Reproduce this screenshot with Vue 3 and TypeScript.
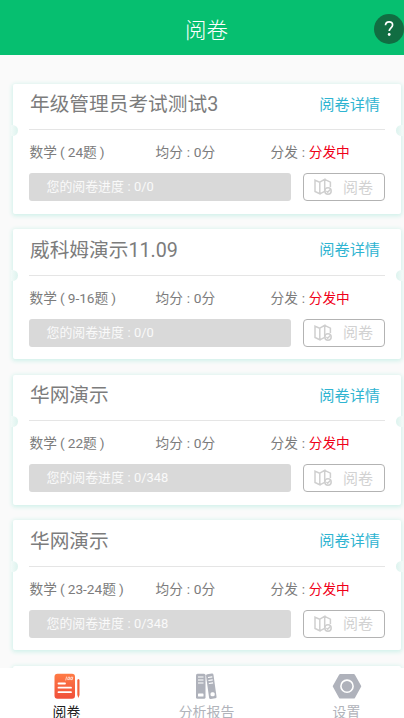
<script setup lang="ts">
interface Exam {
  id: number
  name: string
  questions: string
  average: string
  status: string
  progress: string
}

const exams: Exam[] = [
  { id: 1, name: '年级管理员考试测试3', questions: '24题', average: '0分', status: '分发中', progress: '0/0' },
  { id: 2, name: '威科姆演示11.09', questions: '9-16题', average: '0分', status: '分发中', progress: '0/0' },
  { id: 3, name: '华网演示', questions: '22题', average: '0分', status: '分发中', progress: '0/348' },
  { id: 4, name: '华网演示', questions: '23-24题', average: '0分', status: '分发中', progress: '0/348' },
]
</script>

<template>
  <div class="screen">
    <header class="header">
      <h1 class="heading">阅卷</h1>
      <button class="help" aria-label="帮助">
        <svg viewBox="0 0 30 30" width="30" height="30">
          <path d="M11.500 11.300c.1-2.200 1.500-3.500 3.600-3.500s3.500 1.300 3.500 3.100c0 2.800-3.400 3-3.400 6.200" fill="none" stroke="#fff" stroke-width="1.700" />
          <circle cx="15.200" cy="20.500" r="1.400" fill="#fff" />
        </svg>
      </button>
    </header>

    <main class="list">
      <article v-for="exam in exams" :key="exam.id" class="card">
        <div class="top">
          <h2 class="name">{{ exam.name }}</h2>
          <a class="detail">阅卷详情</a>
        </div>
        <div class="info">
          <span class="subject">数学<i class="punct">(</i>{{ exam.questions }}<i class="punct">)</i></span>
          <span class="average">均分<i class="punct">:</i>{{ exam.average }}</span>
          <span class="status">分发<i class="punct">:</i><b>{{ exam.status }}</b></span>
        </div>
        <div class="actions">
          <div class="progress">您的阅卷进度<i class="punct">:</i>{{ exam.progress }}</div>
          <button class="mark">
            <svg viewBox="0 0 18 18" width="18" height="18" fill="none" stroke="#cfcfcf" stroke-width="1.500">
              <path d="M1 2.200 5.800 4.200V15.800L1 13.500ZM5.800 4.200 10.700 1.400V13.300L5.800 15.800M10.700 1.400 16.400 4.200V9" />
              <circle cx="14" cy="13" r="3.200" />
              <path d="m12.400 13 1.300 1.200 2.500-2.700" />
            </svg>
            <span class="mark-label">阅卷</span>
          </button>
        </div>
      </article>
      <article class="card"></article>
    </main>

    <nav class="tabs">
      <a class="tab active">
        <svg viewBox="0 0 28 28" width="28" height="28">
          <defs>
            <linearGradient id="paper" x1="0" y1="0" x2="0" y2="1">
              <stop offset="0" stop-color="#ff7b45" />
              <stop offset="1" stop-color="#f04f3a" />
            </linearGradient>
          </defs>
          <rect x="1.500" y="1.800" width="20.500" height="25" rx="3" fill="url(#paper)" />
          <g fill="none" stroke="#fff" stroke-width="1.800" stroke-linecap="round">
            <path d="M5.500 11.500H12M5.500 15.700H18M5.500 20.200H18" />
            <path d="m13.500 5-.7 3M15.600 5.200h1.300l-.5 2.400H15ZM18.500 5.200h1.300l-.5 2.400H18Z" stroke-width=".7" />
          </g>
          <path d="M24.300 8.500q0-1.500 1.100-1.500t1.100 1.500V23l-1.100 3-1.100-3Z" fill="#f4633d" />
        </svg>
        <span class="tab-label">阅卷</span>
      </a>
      <a class="tab">
        <svg viewBox="0 0 28 28" width="28" height="28">
          <g fill="#afb2bb">
            <rect x="3" y="1.800" width="9.500" height="25" rx="1.500" />
            <rect x="14.500" y="1.800" width="7.500" height="25" rx="1.500" transform="rotate(-8 18 14)" />
          </g>
          <g fill="none" stroke="#fff" stroke-width="1.200">
            <path d="M5 5h5.500M5 8h5.500M5 11h5.500" />
            <path d="m15 5.500 4.300-.6M15.400 8.500l4.300-.6M15.800 11.500l4.300-.6" />
          </g>
          <rect x="5" y="21.500" width="5.500" height="3" rx=".6" fill="#fff" />
          <rect x="17.500" y="20.300" width="4.200" height="4" rx="1.500" fill="#fff" />
        </svg>
        <span class="tab-label">分析报告</span>
      </a>
      <a class="tab">
        <svg viewBox="0 0 30 28" width="30" height="28">
          <path d="M8.300 2h13.400q.8 0 1.200.7l6.200 11q.3.500 0 1l-6.200 11.200q-.4.700-1.200.7H8.300q-.8 0-1.200-.7L.9 14.700q-.3-.5 0-1l6.200-11Q7.500 2 8.300 2Z" fill="#afb2bb" />
          <circle cx="15" cy="14.200" r="6.100" fill="none" stroke="#fff" stroke-width="1.600" />
        </svg>
        <span class="tab-label">设置</span>
      </a>
    </nav>
  </div>
</template>

<style>
body {
  margin: 0;
  overflow: hidden;
}
</style>

<style scoped>
* {
  box-sizing: border-box;
}

.screen {
  display: flex;
  flex-direction: column;
  width: 404px;
  height: 718px;
  overflow: hidden;
  background: #fafafa;
  color: #7c7c7c;
  font-family: Roboto, "Noto Sans CJK SC", sans-serif;
}

h1,
h2 {
  margin: 0;
  font-weight: 400;
}

button {
  padding: 0;
  border: 0;
  font-family: inherit;
}

svg {
  display: block;
  flex: none;
}

.header {
  display: grid;
  grid-template-columns: 1fr auto 1fr;
  align-items: center;
  flex: none;
  height: 55px;
  padding: 3px 0 0 9px;
  background: #06bf70;
  color: #fff;
}

.heading {
  grid-column: 2;
  padding-top: 3px;
  font-size: 21.500px;
  font-weight: 300;
  line-height: 30px;
}

.help {
  justify-self: end;
  width: 30px;
  height: 30px;
  border-radius: 50%;
  background: #116d42;
}

.list {
  display: flex;
  flex-direction: column;
  gap: 15.500px;
  flex: 1;
  min-height: 0;
  padding: 28.500px 3px 0 13px;
  overflow: hidden;
}

.card {
  position: relative;
  flex: none;
  height: 130px;
  padding: 0 16px;
  border-radius: 2px;
  background: #fff;
  box-shadow: 0 1px 4px 1px #d0f1ea;
}

.card::before,
.card::after {
  content: "";
  position: absolute;
  top: 41px;
  width: 7px;
  height: 11px;
}

.card::before {
  left: -2px;
  border-radius: 0 6px 6px 0;
  background: linear-gradient(90deg, #f2faf8, #dcf3ee);
}

.card::after {
  right: -2px;
  border-radius: 6px 0 0 6px;
  background: linear-gradient(270deg, #f2faf8, #dcf3ee);
}

.top {
  display: flex;
  align-items: center;
  justify-content: space-between;
  height: 46.500px;
  padding: 0 5px 5px 1px;
  border-bottom: 1px solid #e5e5e5;
}

.name {
  padding-top: 2.500px;
  font-size: 19.700px;
  line-height: 26px;
}

.detail {
  padding-bottom: 2px;
  color: #2fb4d1;
  font-size: 15.200px;
}

.info {
  display: grid;
  grid-template-columns: 126px 115px 1fr;
  align-items: center;
  height: 43px;
  padding: 1px 0 0 .5px;
  font-size: 13.700px;
  line-height: 20px;
  white-space: nowrap;
}

.punct {
  display: inline-block;
  width: .79em;
  font-style: normal;
  text-align: center;
}

.status b {
  color: #f00018;
  font-weight: 400;
}

.actions {
  display: flex;
  gap: 12px;
  height: 28px;
}

.progress {
  flex: 1;
  padding-left: 17.500px;
  border-radius: 3px;
  background: #d9d9d9;
  color: #fafafa;
  font-size: 12.900px;
  line-height: 28px;
}

.mark {
  display: flex;
  align-items: center;
  gap: 11px;
  width: 82px;
  padding-left: 10px;
  border: 1px solid #b3b3b3;
  border-radius: 4px;
  background: #fff;
  color: #d2d2d2;
  font-size: 15px;
}

.mark-label {
  padding-bottom: 2px;
}

.tabs {
  position: relative;
  display: grid;
  grid-template-columns: 133px 147px 133px;
  flex: none;
  height: 50px;
  margin-right: -9px;
  background: #fff;
}

.tab {
  display: flex;
  flex-direction: column;
  align-items: center;
  padding-top: 4px;
  color: #b0b3ba;
}

.tab-label {
  padding-top: 5px;
  font-size: 13.900px;
  line-height: 14px;
}

.active {
  color: #202020;
}
</style>
